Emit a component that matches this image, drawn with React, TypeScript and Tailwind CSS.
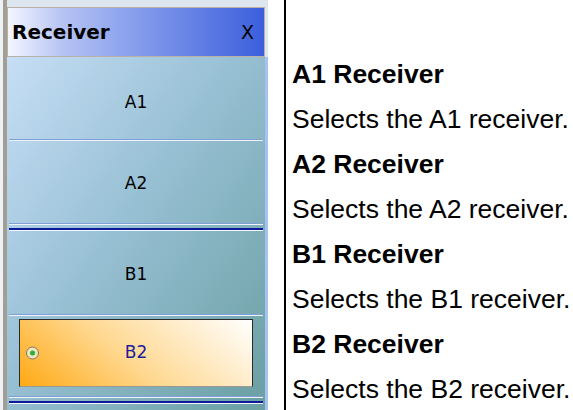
function Sep() {
  return (
    <div className="mx-[2px] flex flex-col">
      <div className="h-px bg-[#7f9fd6]" />
      <div className="h-px bg-[#eef4fb]" />
    </div>
  );
}

function NavySep() {
  return (
    <div className="mx-[2px] flex flex-col">
      <div className="h-[2px] bg-[#0d1a9a]" />
      <div className="h-px bg-[#f4f8fc]" />
    </div>
  );
}

function Panel() {
  return (
    <div className="flex h-full w-[268px] bg-[#dde5ef]">
      <div className="w-[3px] bg-[#eef2f6]" />
      <div className="w-[4px] bg-[#a39e94]" />
      <div className="flex flex-1 flex-col pt-[7px]">
        {/* title bar */}
        <div className="h-[50px] w-[258px] border border-[#b9b2a4] bg-[#8aa0ec]">
          <div className="flex h-full w-full items-center justify-between bg-[linear-gradient(to_right,#f4f6ff_0%,#b4c2f3_22%,#869dec_50%,#3b5fdc_100%)] px-[4px] font-['DejaVu_Sans',sans-serif] text-black">
            <span className="text-[20px] font-bold">Receiver</span>
            <span className="pr-[6px] text-[19px]">X</span>
          </div>
        </div>
        {/* body */}
        <div className="flex flex-1 border-r-[3px] border-[#a6c2ee] bg-[linear-gradient(125deg,#c6def6_0%,#98c0d4_45%,#6a9fa2_100%)] font-['DejaVu_Sans',sans-serif] text-[17px]">
          <div className="flex w-[258px] flex-col">
            <div className="flex h-[82px] items-center justify-center pt-[9px] text-black">A1</div>
            <Sep />
            <div className="flex h-[82px] items-center justify-center pt-[4px] text-black">A2</div>
            <Sep />
            <div className="h-[3px]" />
            <NavySep />
            <div className="flex h-[83px] items-center justify-center pt-[4px] text-black">B1</div>
            <Sep />
            <div className="px-[12px] pt-[3px]">
              <div className="relative flex h-[68px] items-center justify-center border border-[#2a2a2a] border-b-[#9a9a90] bg-[linear-gradient(40deg,#ffa914_0%,#ffd890_45%,#ffffff_100%)] text-[#1c1c9c]">
                <div className="absolute left-[6px] top-1/2 flex h-[13px] w-[13px] -translate-y-1/2 items-center justify-center rounded-full border-[1.5px] border-[#7d7a70] bg-[#f3e3b8]">
                  <div className="h-[5px] w-[5px] rounded-full bg-[#23b23a]" />
                </div>
                <span>B2</span>
              </div>
            </div>
            <div className="h-[9px]" />
            <Sep />
            <div className="h-[3px]" />
            <NavySep />
          </div>
        </div>
      </div>
    </div>
  );
}

const notes = [
  ["A1 Receiver", "Selects the A1 receiver."],
  ["A2 Receiver", "Selects the A2 receiver."],
  ["B1 Receiver", "Selects the B1 receiver."],
  ["B2 Receiver", "Selects the B2 receiver."],
];

export default function App() {
  return (
    <div className="flex h-[410px] w-[573px] overflow-hidden bg-white">
      <Panel />
      <div className="ml-[16px] h-full w-[2px] bg-black" />
      <div className="flex flex-col pl-[6px] pt-[52px] font-['Liberation_Sans',Arial,sans-serif] text-[26.5px] leading-[45px] text-black">
        {notes.map(([title, desc]) => (
          <div key={title}>
            <div className="whitespace-nowrap font-bold">{title}</div>
            <div className="whitespace-nowrap">{desc}</div>
          </div>
        ))}
      </div>
    </div>
  );
}
